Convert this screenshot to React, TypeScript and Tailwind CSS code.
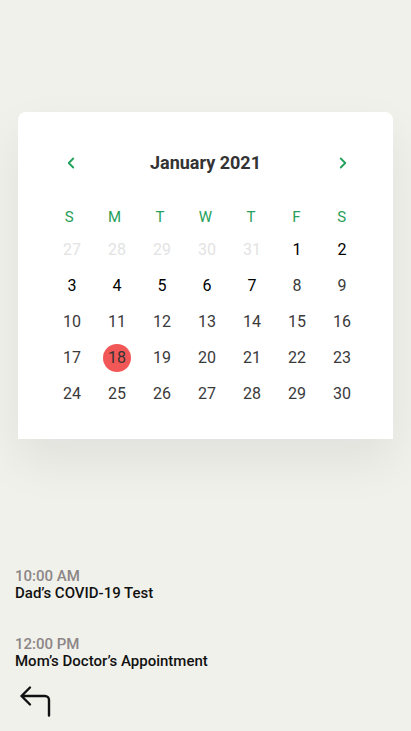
import { ChevronLeft, ChevronRight } from 'lucide-react';

const weekDays = ['S', 'M', 'T', 'W', 'T', 'F', 'S'];

type Day = { n: number; muted?: boolean; strong?: boolean };

const days: Day[] = [
	...[27, 28, 29, 30, 31].map(n => ({ n, muted: true })),
	...[1, 2, 3, 4, 5, 6, 7].map(n => ({ n, strong: true })),
	...Array.from({ length: 23 }, (_, i) => ({ n: i + 8 })),
];

const events = [
	{ time: '10:00 AM', title: 'Dad’s COVID-19 Test' },
	{ time: '12:00 PM', title: 'Mom’s Doctor’s Appointment' },
];

const SELECTED = 18;

const BackIcon = () => (
	<svg width="34" height="34" viewBox="0 0 34 34" fill="none">
		<path
			d="M12 3.5 3.5 12 12 20.5M3.5 12H27a4 4 0 0 1 4 4v15.5"
			stroke="#111"
			strokeWidth="2.4"
			strokeLinecap="round"
			strokeLinejoin="round"
		/>
	</svg>
);

export default function App() {
	return (
		<div className="min-h-[731px] bg-[#f1f1ec] pt-[112px] font-['Roboto',sans-serif]">
			<div className="mx-[18px] rounded-t-lg bg-white pt-[37px] pb-[27px] shadow-[0_22px_50px_rgba(0,0,0,0.07)]">
				<div className="mx-auto w-[318px]">
					<div className="grid h-6 grid-cols-7 items-center">
						<div className="flex justify-center pl-1">
							<ChevronLeft className="size-[18px] text-[#21a05a]" strokeWidth={2.4} />
						</div>
						<h2 className="col-span-5 text-center text-[18px] font-bold text-[#333]">
							January 2021
						</h2>
						<div className="flex justify-center pl-0.5">
							<ChevronRight className="size-[18px] text-[#21a05a]" strokeWidth={2.4} />
						</div>
					</div>

					<div className="mt-[30px] grid h-[28px] grid-cols-7 items-center">
						{weekDays.map((d, i) => (
							<span key={i} className="text-center text-[15px] text-[#26a05a]">
								{d}
							</span>
						))}
					</div>

					<div className="grid grid-cols-7 pt-px pl-[3px]">
						{days.map((d, i) => (
							<div key={i} className="flex h-9 items-center justify-center">
								<span
									className={
										d.n === SELECTED && !d.muted
											? 'flex size-7 items-center justify-center rounded-full bg-[#f25757] text-base text-[#333]'
											: d.muted
												? 'text-base text-[#e3e3e3]'
												: d.strong
													? 'text-base text-black'
													: 'text-base text-[#3a3a3a]'
									}
								>
									{d.n}
								</span>
							</div>
						))}
					</div>
				</div>
			</div>

			<div className="mt-[129px] flex flex-col gap-[34px] px-[15px]">
				{events.map(e => (
					<div key={e.time} className="flex flex-col text-[15px] leading-[17px]">
						<span className="font-medium text-[#8c8686]">{e.time}</span>
						<span className="font-medium text-[#111]">{e.title}</span>
					</div>
				))}
			</div>

			<div className="mt-[14px] pl-[18px]">
				<BackIcon />
			</div>
		</div>
	);
}
